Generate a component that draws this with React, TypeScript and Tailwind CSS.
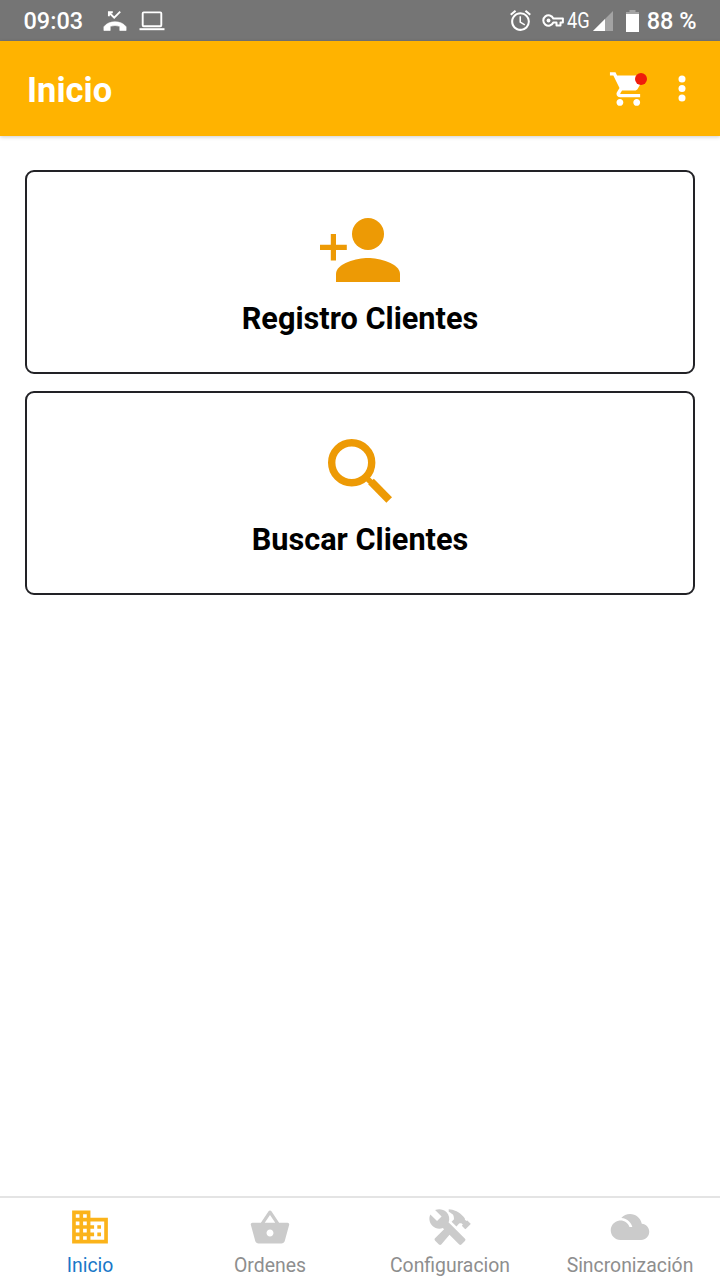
import type { ReactNode } from 'react';
import { MdAlarm } from 'react-icons/md';
import { IoMdBasket, IoMdBusiness, IoMdCart, IoMdCloudy, IoMdConstruct } from 'react-icons/io';

function StatusBar() {
  return (
    <div className="flex h-[41px] items-center bg-[#757575] pl-[23.5px] pr-[23.5px] text-white">
      <span className="w-[79px] pt-[3px] text-[23.5px] font-medium leading-none">09:03</span>
      <MissedCallIcon />
      <LaptopIcon />
      <MdAlarm className="ml-auto h-[25px] w-[25px] shrink-0" />
      <KeyIcon />
      <span className="ml-[3px] w-[24px] origin-left scale-x-[0.83] whitespace-nowrap pt-px text-[22px] leading-none">
        4G
      </span>
      <svg className="ml-[2px] h-5 w-5 shrink-0" viewBox="0 0 20 20">
        <path d="M0 20L20 0v20z" fill="#a3a3a3" />
        <path d="M0 20L12 8v12z" fill="#fff" />
      </svg>
      <svg className="ml-[13px] h-[22px] w-[13px] shrink-0" viewBox="0 0 13 22">
        <path d="M3.5 0h6v2H13v3H0V2h3.5z" fill="#a3a3a3" />
        <path d="M0 4h13v18H0z" fill="#fff" />
      </svg>
      <span className="ml-2 whitespace-nowrap pt-[3px] text-[23.5px] font-medium leading-none">88 %</span>
    </div>
  );
}

function MissedCallIcon() {
  return (
    <svg className="h-5 w-6 shrink-0" viewBox="0 0 24 20">
      <path d="M6 1.500l5.200 5.200 6-6M5.900 5.200V1.300h3.900" fill="none" stroke="#fff" strokeWidth="1.900" />
      <path
        d="M.900 15.800C3.500 12.300 7.500 10.800 12 10.800s8.500 1.500 11.100 5v3.700h-6.300v-4.200q-4.800-1.600-9.600 0v4.200H.900z"
        fill="#fff"
        stroke="#fff"
        strokeWidth=".6"
        strokeLinejoin="round"
      />
    </svg>
  );
}

function LaptopIcon() {
  return (
    <svg className="ml-3 h-5 w-[26px] shrink-0" viewBox="0 0 26 20">
      <rect x="3.700" y="1.400" width="18.600" height="13.800" rx="1" fill="none" stroke="#fff" strokeWidth="1.900" />
      <path d="M.500 17.200h25v2H.500z" fill="#fff" />
    </svg>
  );
}

function KeyIcon() {
  return (
    <svg className="ml-[9px] h-[13px] w-[22px] shrink-0" viewBox="0 0 22 13" fill="none" stroke="#fff">
      <path
        d="M11.300 4.500A5.200 5.200 0 1 0 11.300 8.500H14.500V11.500H18.500V8.500H20.900V4.500z"
        strokeWidth="2"
        strokeLinejoin="round"
      />
      <circle cx="6.500" cy="6.500" r="1.900" fill="#fff" stroke="none" />
    </svg>
  );
}

function Header() {
  return (
    <header className="relative flex h-[95px] items-center bg-[#ffb300] pl-[27px] pr-[34px] text-white shadow-[0_1px_4px_rgba(0,0,0,0.2)]">
      <h1 className="pt-[3px] text-[34.5px] font-bold leading-none">Inicio</h1>
      <button type="button" className="relative ml-auto h-[42px] w-[42px]">
        <IoMdCart className="h-[42px] w-[42px]" />
        <span className="absolute left-[29px] top-[5px] h-3 w-3 rounded-full bg-[#ef1c0c]" />
      </button>
      <button type="button" className="ml-[30px]">
        <svg className="h-[27px] w-[8px]" viewBox="0 0 8 27" fill="currentColor">
          <circle cx="4" cy="4" r="3.5" />
          <circle cx="4" cy="13.5" r="3.5" />
          <circle cx="4" cy="23" r="3.5" />
        </svg>
      </button>
    </header>
  );
}

function MenuCard({ label, icon }: { label: string; icon: ReactNode }) {
  return (
    <button
      type="button"
      className="flex h-[204px] w-full flex-col items-center rounded-[9px] border-2 border-[#222226] bg-white pt-[44px]"
    >
      {icon}
      <span className="mt-[17px] text-[30.7px] font-bold leading-9 text-black">{label}</span>
    </button>
  );
}

function PersonAddIcon() {
  return (
    <svg className="h-[68px] w-20" viewBox="0 0 80 68" fill="#ed9a05">
      <circle cx="48" cy="18" r="16" />
      <path d="M16 66V58c0-10.600 21.300-16 32-16s32 5.400 32 16v8z" />
      <path d="M10.800 18h5.200v10.800h10.800V34H16v10.600h-5.200V34H0v-5.200h10.800z" />
    </svg>
  );
}

function SearchIcon() {
  return (
    <svg className="h-[68px] w-16" viewBox="0 0 64 68" fill="none" stroke="#ed9a05">
      <circle cx="23.700" cy="25.700" r="20" strokeWidth="7.400" />
      <path d="M43 44.500L61.200 63" strokeWidth="8" />
      <path d="M38.500 41L44 46" strokeWidth="5.500" />
    </svg>
  );
}

const tabs = [
  { label: 'Inicio', icon: <IoMdBusiness className="h-11 w-11 text-[#fbb31a]" />, active: true },
  { label: 'Ordenes', icon: <IoMdBasket className="h-11 w-11 text-[#cbcbcb]" />, active: false },
  { label: 'Configuracion', icon: <IoMdConstruct className="h-11 w-11 text-[#cbcbcb]" />, active: false },
  { label: 'Sincronización', icon: <IoMdCloudy className="h-11 w-11 text-[#cbcbcb]" />, active: false }
];

function TabBar() {
  return (
    <nav className="flex h-[84px] border-t-2 border-[#e4e4e4] bg-white">
      {tabs.map((tab) => (
        <button key={tab.label} type="button" className="flex flex-1 basis-0 flex-col items-center pt-[7px]">
          {tab.icon}
          <span
            className={`mt-[5px] whitespace-nowrap text-[19.4px] leading-6 ${
              tab.active ? 'text-[#1878c8]' : 'text-[#8e8e8e]'
            }`}
          >
            {tab.label}
          </span>
        </button>
      ))}
    </nav>
  );
}

export default function App() {
  return (
    <div className="flex h-screen flex-col bg-white font-['Roboto',sans-serif]">
      <StatusBar />
      <Header />
      <main className="flex flex-1 flex-col gap-[17px] px-[25px] pt-[34px]">
        <MenuCard label="Registro Clientes" icon={<PersonAddIcon />} />
        <MenuCard label="Buscar Clientes" icon={<SearchIcon />} />
      </main>
      <TabBar />
    </div>
  );
}
